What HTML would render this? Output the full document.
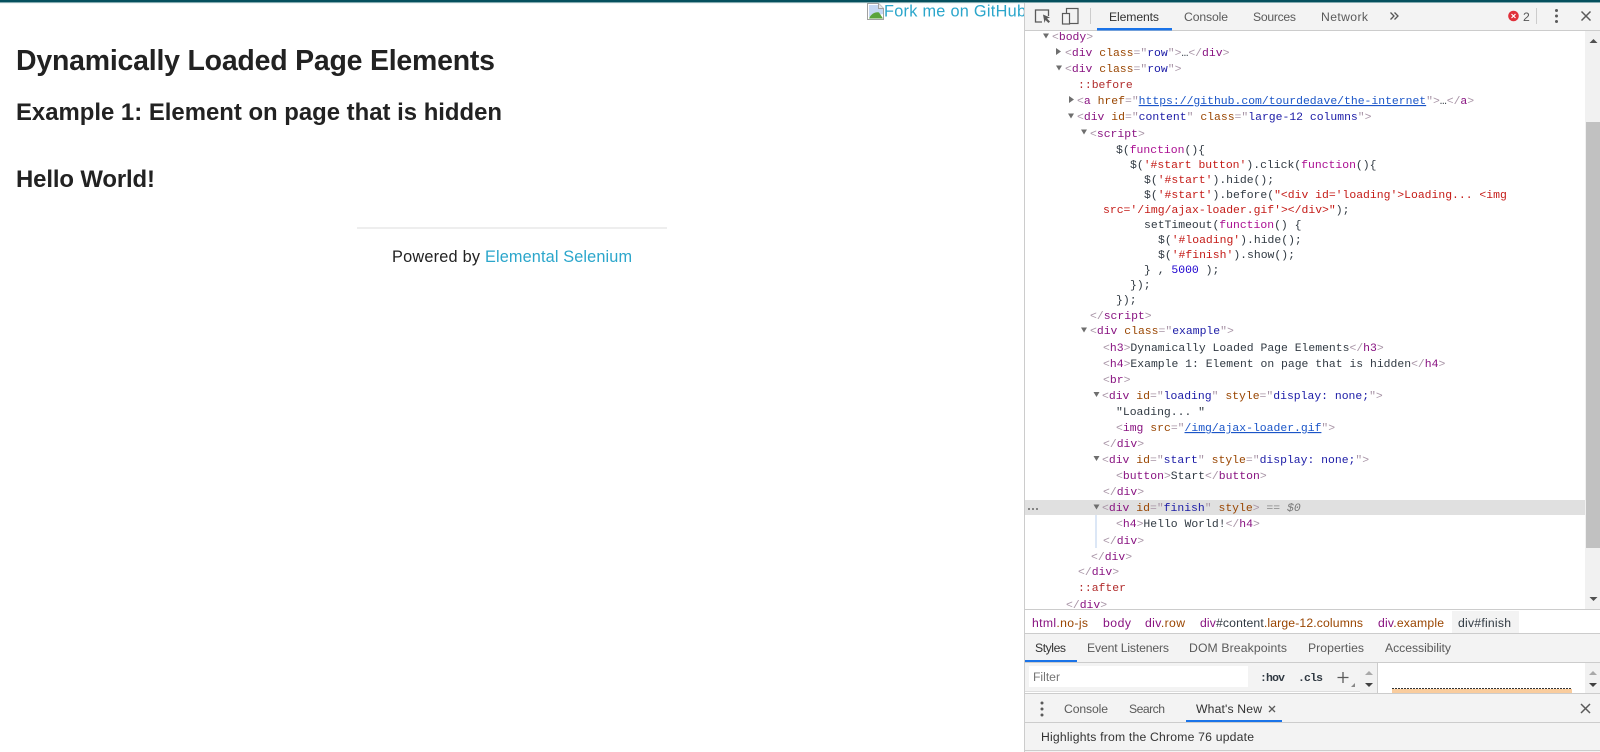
<!DOCTYPE html>
<html lang="en"><head><meta charset="utf-8"><title>Dynamically Loaded Page Elements</title>
<style>
html,body{margin:0;padding:0;background:#fff;width:1600px;height:752px;overflow:hidden}
svg{position:absolute;left:0;top:0;display:block;filter:blur(.3px)}
text{font-family:"Liberation Sans",sans-serif}
.m text,text.c{font-family:"Liberation Mono",monospace;font-size:11.42px;white-space:pre;fill:#303942}
.b{fill:#a894a6}.t{fill:#881280}.a{fill:#994500}.v{fill:#1a1aa6}.k{fill:#aa0d91}.s{fill:#c41a16}.n{fill:#1c00cf}.l{fill:#1a55c8;text-decoration:underline}.p{fill:#b02a2a}
.ui{font-size:12.2px;fill:#5a5a5a}
</style></head><body>
<svg width="1600" height="752" viewBox="0 0 1600 752" xmlns="http://www.w3.org/2000/svg">
<rect width="1600" height="752" fill="#fff"/>
<rect width="1600" height="2.4" fill="#05505e"/>
<rect y="2.4" width="1600" height=".8" fill="#b9cfd3"/>

<!-- page -->
<text x="16" y="70" font-size="28.45" font-weight="700" fill="#222" textLength="479">Dynamically Loaded Page Elements</text>
<text x="16" y="120" font-size="23.9" font-weight="700" fill="#222" textLength="486">Example 1: Element on page that is hidden</text>
<text x="16" y="187" font-size="23.9" font-weight="700" fill="#222" textLength="139">Hello World!</text>
<rect x="357" y="227.3" width="310" height="1.4" fill="#e6e6e6"/>
<text x="392" y="262" font-size="16.3" fill="#222" textLength="88">Powered by</text>
<text x="485" y="262" font-size="16.3" fill="#2ba6cb" textLength="147">Elemental Selenium</text>

<!-- broken image icon -->
<path d="M867.5 3.5h11l5 5v11h-16z" fill="#fff" stroke="#a0a0a0"/>
<path d="M869 5h9v4h5v5l-14 3z" fill="#c5d8f3"/>
<path d="M869 18.500c2-5 7-7 10-6l4 6z" fill="#5aa33b"/>
<path d="M878.500 3.500v5h5" fill="#e8e8e8" stroke="#a0a0a0"/>
<text x="884" y="16.5" font-size="16.3" fill="#2ba6cb" textLength="142">Fork me on GitHub</text>

<!-- devtools base -->
<rect x="1024" y="3" width="576" height="749" fill="#fff"/>
<rect x="1024" y="3" width="1" height="749" fill="#ccc"/>
<rect x="1025" y="3" width="575" height="27" fill="#f3f3f3"/>
<rect x="1025" y="30" width="575" height="1" fill="#ccc"/>

<!-- toolbar icons -->
<path d="M1042 22h-6.500v-12h13v6" fill="none" stroke="#5a5a5a" stroke-width="1.300"/>
<path d="M1043 14.500l7 3-3 1 3 3-1.500 1.500-3-3-1 3z" fill="#5a5a5a"/>
<rect x="1066.500" y="8.500" width="11.500" height="15" fill="none" stroke="#5a5a5a" stroke-width="1.200"/>
<rect x="1062.500" y="13.500" width="7" height="10.500" fill="#f3f3f3" stroke="#5a5a5a" stroke-width="1.200"/>
<rect x="1090" y="8" width="1" height="16" fill="#ccc"/>
<text class="ui" x="1109" y="21" textLength="50" style="fill:#333">Elements</text>
<rect x="1097" y="28" width="75" height="2.500" fill="#1a73e8"/>
<text class="ui" x="1184" y="21" textLength="44">Console</text>
<text class="ui" x="1253" y="21" textLength="43">Sources</text>
<text class="ui" x="1321" y="21" textLength="47">Network</text>
<path d="M1390.500 12.500l3.500 3.500-3.500 3.500M1394.500 12.500l3.500 3.500-3.500 3.500" fill="none" stroke="#555" stroke-width="1.300"/>
<circle cx="1513.500" cy="16" r="5.300" fill="#e0303a"/>
<path d="M1511.500 14l4 4M1515.500 14l-4 4" stroke="#fff" stroke-width="1.200"/>
<text class="ui" x="1523" y="21" style="fill:#555">2</text>
<rect x="1536" y="8" width="1" height="16" fill="#ccc"/>
<circle cx="1556.500" cy="10.500" r="1.500" fill="#5a5a5a"/><circle cx="1556.500" cy="16" r="1.500" fill="#5a5a5a"/><circle cx="1556.500" cy="21.500" r="1.500" fill="#5a5a5a"/>
<path d="M1581.500 11.500l9 9M1590.500 11.500l-9 9" stroke="#5a5a5a" stroke-width="1.500"/>

<!-- selected row -->
<rect x="1025" y="500" width="560" height="15" fill="#e0e0e0"/>
<circle cx="1029" cy="509" r="1" fill="#666"/><circle cx="1033" cy="509" r="1" fill="#666"/><circle cx="1037" cy="509" r="1" fill="#666"/>
<rect x="1095.500" y="515" width="1" height="33" fill="#b8cfee"/>

<!-- arrows -->
<g fill="#6e6e6e">
<path d="M1043 33.500h6l-3 5z"/>
<path d="M1056 48l5 3.500-5 3.500z"/>
<path d="M1056 65.500h6l-3 5z"/>
<path d="M1069 96l5 3.500-5 3.500z"/>
<path d="M1068 113.500h6l-3 5z"/>
<path d="M1081 129.500h6l-3 5z"/>
<path d="M1081 327.500h6l-3 5z"/>
<path d="M1093.500 392h6l-3 5z"/>
<path d="M1093.500 456h6l-3 5z"/>
<path d="M1093.500 504.500h6l-3 5z"/>
</g>

<!-- elements tree -->
<g class="m" transform="translate(0,-1)">
<text x="1052" y="41"><tspan class="b">&lt;</tspan><tspan class="t">body</tspan><tspan class="b">&gt;</tspan></text>
<text x="1065" y="57"><tspan class="b">&lt;</tspan><tspan class="t">div</tspan> <tspan class="a">class</tspan><tspan class="b">="</tspan><tspan class="v">row</tspan><tspan class="b">"&gt;</tspan>…<tspan class="b">&lt;/</tspan><tspan class="t">div</tspan><tspan class="b">&gt;</tspan></text>
<text x="1065" y="73"><tspan class="b">&lt;</tspan><tspan class="t">div</tspan> <tspan class="a">class</tspan><tspan class="b">="</tspan><tspan class="v">row</tspan><tspan class="b">"&gt;</tspan></text>
<text x="1078" y="89" class="p"><tspan class="p">::before</tspan></text>
<text x="1077" y="105"><tspan class="b">&lt;</tspan><tspan class="t">a</tspan> <tspan class="a">href</tspan><tspan class="b">="</tspan><tspan class="l">https://github.com/tourdedave/the-internet</tspan><tspan class="b">"&gt;</tspan>…<tspan class="b">&lt;/</tspan><tspan class="t">a</tspan><tspan class="b">&gt;</tspan></text>
<text x="1077" y="121"><tspan class="b">&lt;</tspan><tspan class="t">div</tspan> <tspan class="a">id</tspan><tspan class="b">="</tspan><tspan class="v">content</tspan><tspan class="b">"</tspan> <tspan class="a">class</tspan><tspan class="b">="</tspan><tspan class="v">large-12 columns</tspan><tspan class="b">"&gt;</tspan></text>
<text x="1090" y="138"><tspan class="b">&lt;</tspan><tspan class="t">script</tspan><tspan class="b">&gt;</tspan></text>
<text x="1116" y="154">$(<tspan class="k">function</tspan>(){</text>
<text x="1130" y="169">$(<tspan class="s">'#start button'</tspan>).click(<tspan class="k">function</tspan>(){</text>
<text x="1144" y="184">$(<tspan class="s">'#start'</tspan>).hide();</text>
<text x="1144" y="199">$(<tspan class="s">'#start'</tspan>).before(<tspan class="s">"&lt;div id='loading'&gt;Loading... &lt;img</tspan></text>
<text x="1103" y="214"><tspan class="s">src='/img/ajax-loader.gif'&gt;&lt;/div&gt;"</tspan>);</text>
<text x="1144" y="229">setTimeout(<tspan class="k">function</tspan>() {</text>
<text x="1158" y="244">$(<tspan class="s">'#loading'</tspan>).hide();</text>
<text x="1158" y="259">$(<tspan class="s">'#finish'</tspan>).show();</text>
<text x="1144" y="274">} , <tspan class="n">5000</tspan> );</text>
<text x="1130" y="289">});</text>
<text x="1116" y="304">});</text>
<text x="1090" y="320"><tspan class="b">&lt;/</tspan><tspan class="t">script</tspan><tspan class="b">&gt;</tspan></text>
<text x="1090" y="335"><tspan class="b">&lt;</tspan><tspan class="t">div</tspan> <tspan class="a">class</tspan><tspan class="b">="</tspan><tspan class="v">example</tspan><tspan class="b">"&gt;</tspan></text>
<text x="1103" y="352"><tspan class="b">&lt;</tspan><tspan class="t">h3</tspan><tspan class="b">&gt;</tspan>Dynamically Loaded Page Elements<tspan class="b">&lt;/</tspan><tspan class="t">h3</tspan><tspan class="b">&gt;</tspan></text>
<text x="1103" y="368"><tspan class="b">&lt;</tspan><tspan class="t">h4</tspan><tspan class="b">&gt;</tspan>Example 1: Element on page that is hidden<tspan class="b">&lt;/</tspan><tspan class="t">h4</tspan><tspan class="b">&gt;</tspan></text>
<text x="1103" y="384"><tspan class="b">&lt;</tspan><tspan class="t">br</tspan><tspan class="b">&gt;</tspan></text>
<text x="1102" y="400"><tspan class="b">&lt;</tspan><tspan class="t">div</tspan> <tspan class="a">id</tspan><tspan class="b">="</tspan><tspan class="v">loading</tspan><tspan class="b">"</tspan> <tspan class="a">style</tspan><tspan class="b">="</tspan><tspan class="v">display: none;</tspan><tspan class="b">"&gt;</tspan></text>
<text x="1116" y="416">"Loading... "</text>
<text x="1116" y="432"><tspan class="b">&lt;</tspan><tspan class="t">img</tspan> <tspan class="a">src</tspan><tspan class="b">="</tspan><tspan class="l">/img/ajax-loader.gif</tspan><tspan class="b">"&gt;</tspan></text>
<text x="1103" y="448"><tspan class="b">&lt;/</tspan><tspan class="t">div</tspan><tspan class="b">&gt;</tspan></text>
<text x="1102" y="464"><tspan class="b">&lt;</tspan><tspan class="t">div</tspan> <tspan class="a">id</tspan><tspan class="b">="</tspan><tspan class="v">start</tspan><tspan class="b">"</tspan> <tspan class="a">style</tspan><tspan class="b">="</tspan><tspan class="v">display: none;</tspan><tspan class="b">"&gt;</tspan></text>
<text x="1116" y="480"><tspan class="b">&lt;</tspan><tspan class="t">button</tspan><tspan class="b">&gt;</tspan>Start<tspan class="b">&lt;/</tspan><tspan class="t">button</tspan><tspan class="b">&gt;</tspan></text>
<text x="1103" y="496"><tspan class="b">&lt;/</tspan><tspan class="t">div</tspan><tspan class="b">&gt;</tspan></text>
<text x="1102" y="512"><tspan class="b">&lt;</tspan><tspan class="t">div</tspan> <tspan class="a">id</tspan><tspan class="b">="</tspan><tspan class="v">finish</tspan><tspan class="b">"</tspan> <tspan class="a">style</tspan><tspan class="b">&gt;</tspan> <tspan style="fill:#888">==</tspan> <tspan style="fill:#777;font-style:italic">$0</tspan></text>
<text x="1116" y="528"><tspan class="b">&lt;</tspan><tspan class="t">h4</tspan><tspan class="b">&gt;</tspan>Hello World!<tspan class="b">&lt;/</tspan><tspan class="t">h4</tspan><tspan class="b">&gt;</tspan></text>
<text x="1103" y="545"><tspan class="b">&lt;/</tspan><tspan class="t">div</tspan><tspan class="b">&gt;</tspan></text>
<text x="1091" y="561"><tspan class="b">&lt;/</tspan><tspan class="t">div</tspan><tspan class="b">&gt;</tspan></text>
<text x="1078" y="576"><tspan class="b">&lt;/</tspan><tspan class="t">div</tspan><tspan class="b">&gt;</tspan></text>
<text x="1078" y="592"><tspan class="p">::after</tspan></text>
<text x="1066" y="609"><tspan class="b">&lt;/</tspan><tspan class="t">div</tspan><tspan class="b">&gt;</tspan></text>
</g>

<!-- scrollbar -->
<rect x="1585" y="31" width="15" height="578" fill="#f1f1f1"/>
<rect x="1586" y="122" width="14" height="426" fill="#c1c1c1"/>
<path d="M1589.500 43h8l-4-4z" fill="#505050"/>
<path d="M1589.500 597h8l-4 4z" fill="#505050"/>

<!-- breadcrumbs -->
<rect x="1025" y="609" width="575" height="1" fill="#ccc"/>
<rect x="1025" y="610" width="575" height="23" fill="#fff"/>
<rect x="1452" y="611" width="67" height="22" fill="#f3f3f3"/>
<text class="ui" x="1032" y="627" textLength="56"><tspan fill="#881280">html</tspan><tspan fill="#994500">.no-js</tspan></text>
<text class="ui" x="1103" y="627" textLength="28" style="fill:#881280">body</text>
<text class="ui" x="1145" y="627" textLength="40"><tspan fill="#881280">div</tspan><tspan fill="#994500">.row</tspan></text>
<text class="ui" x="1200" y="627" textLength="163"><tspan fill="#881280">div</tspan><tspan fill="#303942">#content</tspan><tspan fill="#994500">.large-12.columns</tspan></text>
<text class="ui" x="1378" y="627" textLength="66"><tspan fill="#881280">div</tspan><tspan fill="#994500">.example</tspan></text>
<text class="ui" x="1458" y="627" textLength="53" style="fill:#303942">div#finish</text>
<rect x="1025" y="633" width="575" height="1" fill="#ccc"/>

<!-- styles tabs -->
<rect x="1025" y="634" width="575" height="28" fill="#f3f3f3"/>
<text class="ui" x="1035" y="652" textLength="31" style="fill:#333">Styles</text>
<text class="ui" x="1087" y="652" textLength="82">Event Listeners</text>
<text class="ui" x="1189" y="652" textLength="98">DOM Breakpoints</text>
<text class="ui" x="1308" y="652" textLength="56">Properties</text>
<text class="ui" x="1385" y="652" textLength="66">Accessibility</text>
<rect x="1025" y="660" width="52" height="2.500" fill="#1a73e8"/>
<rect x="1025" y="662" width="575" height="1" fill="#ccc"/>

<!-- filter row -->
<rect x="1025" y="663" width="335" height="28" fill="#f3f3f3"/>
<rect x="1029" y="666" width="219" height="21" fill="#fff"/>
<text class="ui" x="1033" y="681" textLength="27" style="fill:#757575">Filter</text>
<text class="c" x="1260" y="681" font-weight="700" textLength="25">:hov</text>
<text class="c" x="1298" y="681" font-weight="700" textLength="25">.cls</text>
<path d="M1343 672v11M1337.500 677.500h11" stroke="#5a5a5a" stroke-width="1.300"/>
<path d="M1355 683v4h-4z" fill="#888"/>
<rect x="1360" y="663" width="17" height="30" fill="#f1f1f1"/>
<path d="M1365 675h8l-4-4z" fill="#a8a8a8"/>
<path d="M1365 683h8l-4 4z" fill="#404040"/>
<rect x="1377" y="663" width="1" height="30" fill="#ccc"/>
<rect x="1585" y="663" width="15" height="30" fill="#f1f1f1"/>
<path d="M1589 675h8l-4-4z" fill="#a8a8a8"/>
<path d="M1589 683h8l-4 4z" fill="#404040"/>
<rect x="1392" y="689" width="180" height="4" fill="#f9cc9d"/>
<path d="M1392 688.500h180" stroke="#333" stroke-dasharray="2 1"/>
<rect x="1025" y="691" width="335" height="1" fill="#ddd"/>

<!-- drawer -->
<rect x="1025" y="693" width="575" height="1" fill="#ccc"/>
<rect x="1025" y="694" width="575" height="28" fill="#f3f3f3"/>
<circle cx="1042" cy="703" r="1.500" fill="#5a5a5a"/><circle cx="1042" cy="709" r="1.500" fill="#5a5a5a"/><circle cx="1042" cy="715" r="1.500" fill="#5a5a5a"/>
<text class="ui" x="1064" y="713" textLength="44">Console</text>
<text class="ui" x="1129" y="713" textLength="36">Search</text>
<text class="ui" x="1196" y="713" textLength="66" style="fill:#333">What's New</text>
<path d="M1269 706l6 6M1275 706l-6 6" stroke="#5a5a5a" stroke-width="1.300"/>
<rect x="1186" y="720" width="96" height="2.500" fill="#1a73e8"/>
<path d="M1581 704l9 9M1590 704l-9 9" stroke="#5a5a5a" stroke-width="1.500"/>
<rect x="1025" y="722" width="575" height="1" fill="#ccc"/>
<rect x="1025" y="723" width="575" height="27" fill="#f3f3f3"/>
<text class="ui" x="1041" y="741" textLength="213" style="fill:#333">Highlights from the Chrome 76 update</text>
<rect x="1025" y="750" width="575" height="1" fill="#ccc"/>
<rect x="1025" y="751" width="575" height="1" fill="#f3f3f3"/>
</svg>
</body></html>
